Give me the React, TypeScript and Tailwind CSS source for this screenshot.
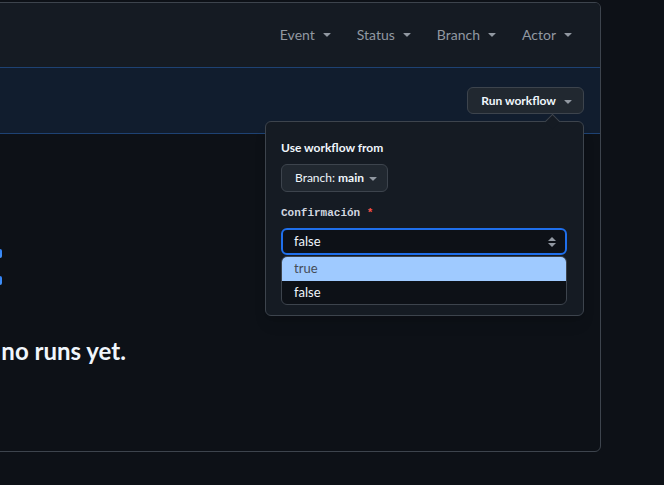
import React from 'react'

const FONT = { fontFamily: 'Lato, "Noto Sans", sans-serif' }

function Caret({ className = 'text-[#9198a1]' }: { className?: string }) {
  return (
    <svg viewBox="0 0 16 16" width="16" height="16" className={className} fill="currentColor">
      <path d="m4.427 7.427 3.396 3.396a.25.25 0 0 0 .354 0l3.396-3.396A.25.25 0 0 0 11.396 7H4.604a.25.25 0 0 0-.177.427Z" />
    </svg>
  )
}

const FILTERS = ['Event', 'Status', 'Branch', 'Actor']

export default function App() {
  return (
    <div className="h-[485px] w-[664px] overflow-hidden bg-[#0d1117] pt-[2px]" style={FONT}>
      <div className="relative -ml-[400px] flex h-[450px] w-[1001px] flex-col overflow-hidden rounded-md border border-[#3d444d]">
        {/* filter header */}
        <div className="flex h-[64px] shrink-0 items-center justify-end gap-[22px] bg-[#151b23] pb-[2px] pr-[24px]">
          {FILTERS.map((f) => (
            <div key={f} className="flex items-center gap-[4px] text-[14px] text-[#9198a1]">
              <span>{f}</span>
              <Caret />
            </div>
          ))}
        </div>

        {/* banner */}
        <div className="flex h-[67px] shrink-0 items-center justify-end border-y border-[#1e4273] bg-[#111d2e] pr-4">
          <button className="flex h-[27px] items-center gap-[4px] rounded-md border border-[#3d444d] bg-[#212830] pl-[13px] pr-[7px] text-[12px] font-bold text-[#f0f6fc]">
            Run workflow
            <Caret className="text-[#9198a1]" />
          </button>
        </div>

        {/* blankslate */}
        <div className="flex w-[726px] flex-col items-center pt-[114px]">
          <svg width="80" height="40" viewBox="0 0 80 40">
            <defs>
              <linearGradient id="bs" x1="0" y1="0" x2="0" y2="1">
                <stop offset="0" stopColor="#2f81f7" />
                <stop offset="1" stopColor="#4493f8" />
              </linearGradient>
            </defs>
            <rect x="72" y="1" width="6" height="9" rx="2" fill="url(#bs)" />
            <rect x="72" y="28" width="6" height="9" rx="2" fill="url(#bs)" />
            <rect x="40" y="8" width="20" height="24" rx="3" fill="none" stroke="#2f81f7" strokeWidth="3" />
          </svg>
          <p className="mt-[48px] whitespace-nowrap text-[24px] font-bold leading-[30px] text-[#f0f6fc]">This workflow has no runs yet.</p>
        </div>

        {/* run workflow popover */}
        <div className="absolute right-[16px] top-[118px] w-[319px] rounded-md border border-[#3d444d] bg-[#151b23] pb-[10px] pl-[15px] pr-4 pt-[17px] shadow-lg">
          <div className="absolute -top-[6px] right-[25px] h-[11px] w-[11px] rotate-45 border-l border-t border-[#3d444d] bg-[#151b23]" />
          <p className="text-[12px] font-bold leading-[18px] text-[#f0f6fc]">Use workflow from</p>
          <button className="mt-[7px] flex h-[28px] items-center gap-[1px] rounded-md border border-[#3d444d] bg-[#212830] pl-[13px] pr-[6px] text-[12px] text-[#f0f6fc]">
            <span>
              Branch: <span className="font-bold">main</span>
            </span>
            <Caret className="text-[#9198a1]" />
          </button>
          <p className="mt-[12px] text-[11px] font-bold leading-[18px] text-[#d1d7e0]" style={{ fontFamily: '"Liberation Mono", "DejaVu Sans Mono", monospace' }}>
            Confirmación <span className="text-[#f85149]">*</span>
          </p>
          <div className="mt-[6px] flex h-[27px] items-center justify-between rounded-md border-2 border-[#1f6feb] bg-[#0d1117] pl-[11px] pr-[8px] text-[13px] text-[#f0f6fc]">
            <span>false</span>
            <svg width="10" height="12" viewBox="0 0 10 12" fill="#9198a1">
              <path d="M5 1 9 5H1Z" />
              <path d="M5 11 1 7h8Z" />
            </svg>
          </div>
          <div className="mt-[1px] overflow-hidden rounded-md border border-[#3d444d] bg-[#0d1117] text-[13px]">
            <div className="flex h-[24px] items-center bg-[#9fcaff] pl-[12px] text-[#454c56]">true</div>
            <div className="flex h-[23px] items-center pl-[12px] text-[#f0f6fc]">false</div>
          </div>
        </div>
      </div>
    </div>
  )
}
